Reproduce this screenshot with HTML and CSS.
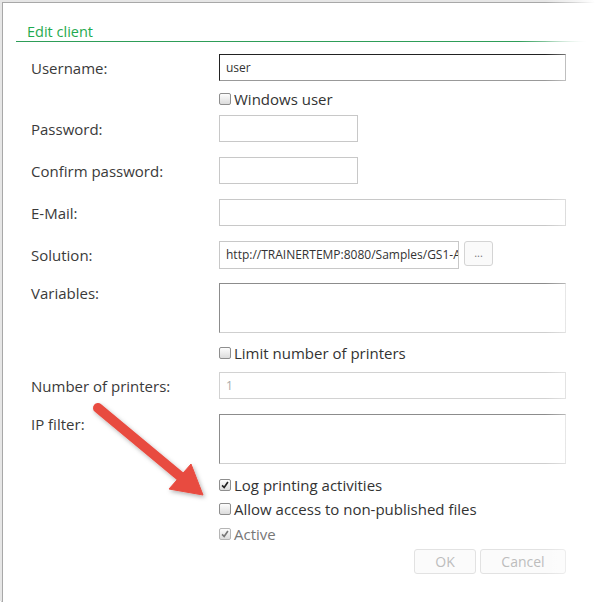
FILE: index.html
```html
<!DOCTYPE html>
<html>
<head>
<meta charset="utf-8">
<link rel="stylesheet" href="styles.css">
</head>
<body>
<div class="dialog">
  <div class="header"><h1 class="title">Edit client</h1></div>
  <form class="form">
    <div class="row mb-a">
      <label class="lbl">Username:</label>
      <div class="field focus wide">user</div>
    </div>
    <div class="check-row mb-a2">
      <span class="cb"></span><span class="cb-text">Windows user</span>
    </div>
    <div class="row">
      <label class="lbl">Password:</label>
      <div class="field short"></div>
    </div>
    <div class="row">
      <label class="lbl">Confirm password:</label>
      <div class="field short"></div>
    </div>
    <div class="row">
      <label class="lbl">E-Mail:</label>
      <div class="field wide"></div>
    </div>
    <div class="row row-sol">
      <label class="lbl">Solution:</label>
      <div class="field sol">http://TRAINERTEMP:8080/Samples/GS1-A4</div>
      <div class="dots">...</div>
    </div>
    <div class="row top mb-b">
      <label class="lbl">Variables:</label>
      <div class="field wide area"></div>
    </div>
    <div class="check-row mb-b2">
      <span class="cb"></span><span class="cb-text">Limit number of printers</span>
    </div>
    <div class="row">
      <label class="lbl">Number of printers:</label>
      <div class="field wide disabled">1</div>
    </div>
    <div class="row top mb-c">
      <label class="lbl">IP filter:</label>
      <div class="field wide area"></div>
    </div>
    <div class="check-row mb-d">
      <span class="cb checked"><svg viewBox="0 0 12 12"><path d="M2.5 6.5 L5 9 L9.5 2.5" /></svg></span><span class="cb-text">Log printing activities</span>
    </div>
    <div class="check-row mb-e">
      <span class="cb"></span><span class="cb-text">Allow access to non-published files</span>
    </div>
    <div class="check-row mb-e dis">
      <span class="cb checked"><svg viewBox="0 0 12 12"><path d="M2.5 6.5 L5 9 L9.5 2.5" /></svg></span><span class="cb-text">Active</span>
    </div>
    <div class="buttons">
      <div class="btn ok">OK</div>
      <div class="btn cancel">Cancel</div>
    </div>
  </form>
  <svg class="arrow" width="595" height="602" viewBox="0 0 595 602">
    <defs>
      <filter id="sh" x="-20%" y="-20%" width="140%" height="140%">
        <feDropShadow dx="1.5" dy="2" stdDeviation="2" flood-color="#000" flood-opacity="0.3"/>
      </filter>
    </defs>
    <g filter="url(#sh)" fill="#e84b40" stroke="#e84b40">
      <line x1="98" y1="408" x2="181" y2="477" stroke-width="10" stroke-linecap="round"/>
      <polygon points="169,489 191,464 203,495" stroke-width="1" stroke-linejoin="round"/>
    </g>
  </svg>
  <div class="fade"></div>
</div>
</body>
</html>
```
FILE: styles.css
```css
html, body {
  margin: 0;
  padding: 0;
  background: #fff;
}
body {
  font-family: "Open Sans", "DejaVu Sans", sans-serif;
  color: #3a3a3a;
  width: 595px;
  height: 602px;
  overflow: hidden;
}
.dialog {
  position: relative;
  margin: 2px 0 0 2px;
  height: 600px;
  border-top: 1px solid #a8a8a8;
  border-left: 1px solid #a8a8a8;
  box-shadow: -2px -2px 0 #e6e6e6, -1px -1px 0 #d0d0d0;
}
.header {
  margin: 0 8px 0 13px;
  padding: 20px 0 1px 11px;
  background: linear-gradient(to right, #2e9d58 0%, #2e9d58 88%, #ffffff 100%) no-repeat left bottom / 100% 1px;
}
.title {
  margin: 0;
  font-size: 14.5px;
  font-weight: normal;
  line-height: 18px;
  color: #1faa4f;
}
.form {
  margin: 12px 0 0 28px;
  width: 535px;
  font-size: 15px;
}
.row {
  display: flex;
  align-items: center;
  margin-bottom: 15px;
}
.row.top { align-items: flex-start; }
.row.row-sol { margin-bottom: 14px; }
.mb-a { margin-bottom: 8px; }
.mb-a2 { margin-bottom: 6px; }
.mb-b { margin-bottom: 10px; }
.mb-b2 { margin-bottom: 9px; }
.mb-c { margin-bottom: 11px; }
.mb-d { margin-bottom: 4px; }
.mb-e { margin-bottom: 5px; }
.lbl {
  width: 188px;
  flex: none;
  line-height: 20px;
  color: #3a3a3a;
}
.field {
  box-sizing: border-box;
  height: 27px;
  border: 1px solid #c8c8c8;
  font-size: 12px;
  line-height: 25px;
  padding: 0 6px;
  color: #333;
  white-space: nowrap;
  overflow: hidden;
  background: #fff;
}
.wide { width: 347px; }
.short { width: 139px; }
.sol { width: 240px; height: 28px; line-height: 26px; padding-right: 0; }
.focus {
  border-color: #222 #999 #999 #222;
}
.area {
  height: 50px;
  border-color: #8c8c8c #d8d8d8 #cfcfcf #8c8c8c;
}
.disabled {
  color: #aaa;
  border-color: #d2d2d2;
}
.dots {
  box-sizing: border-box;
  margin-left: 5px;
  width: 29px;
  height: 25px;
  align-self: flex-start;
  border: 1px solid #d4d4d4;
  border-radius: 3px;
  background: #fafafa;
  color: #777;
  font-size: 11px;
  line-height: 22px;
  text-align: center;
}
.check-row {
  display: flex;
  align-items: center;
  height: 20px;
  margin-left: 188px;
  gap: 3px;
}
.cb {
  box-sizing: border-box;
  width: 12px;
  height: 12px;
  border: 1px solid #8e8e8e;
  border-radius: 2px;
  background: linear-gradient(#fdfdfd, #dcdcdc);
  display: flex;
}
.cb svg {
  width: 10px;
  height: 10px;
}
.cb svg path {
  fill: none;
  stroke: #222;
  stroke-width: 2;
}
.cb-text {
  line-height: 20px;
  color: #333;
}
.dis .cb { border-color: #b5b5b5; }
.dis .cb svg path { stroke: #777; }
.dis .cb-text { color: #777; }
.buttons {
  display: flex;
  justify-content: flex-end;
  gap: 4px;
}
.btn {
  box-sizing: border-box;
  height: 25px;
  border: 1px solid #e2e2e2;
  border-radius: 3px;
  background: #fbfbfb;
  color: #bdbdbd;
  font-size: 14px;
  line-height: 23px;
  text-align: center;
}
.ok { width: 62px; }
.cancel { width: 86px; }
.arrow {
  position: absolute;
  left: -3px;
  top: -3px;
  pointer-events: none;
}
.fade {
  position: absolute;
  top: -3px;
  right: 0;
  bottom: 0;
  width: 50px;
  background: linear-gradient(to right, rgba(255,255,255,0), rgba(255,255,255,0.55) 60%, #fff 100%);
  pointer-events: none;
}
```
